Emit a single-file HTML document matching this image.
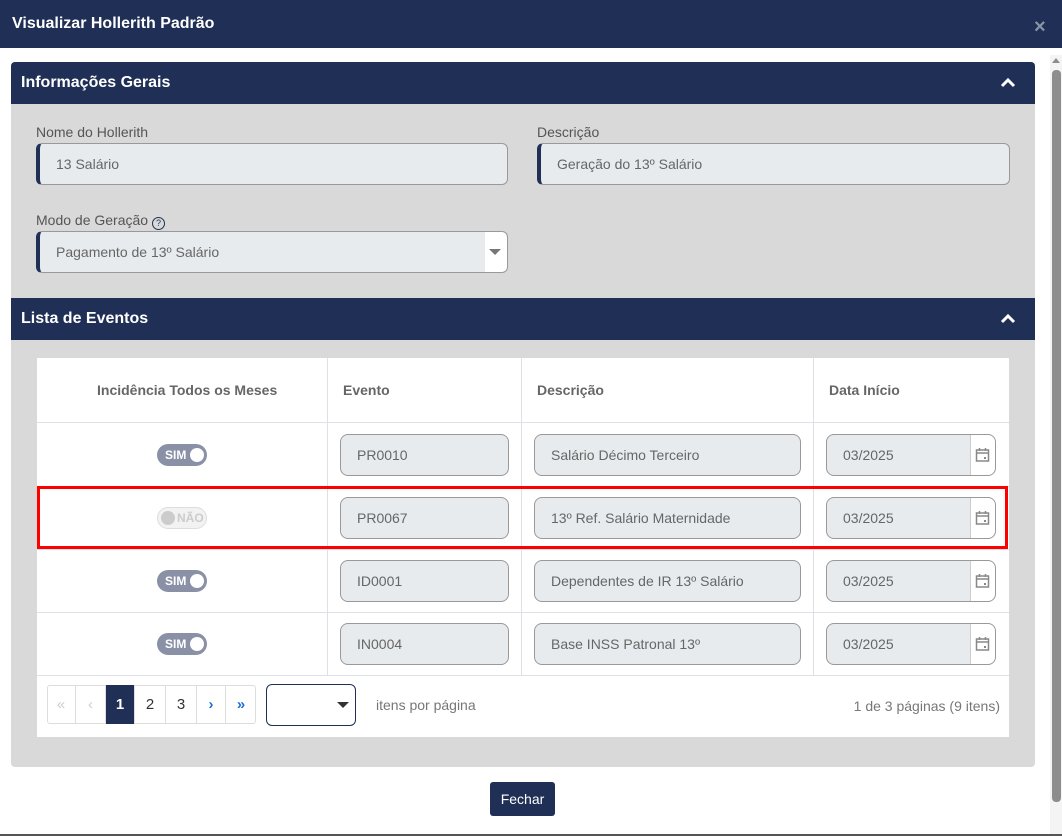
<!DOCTYPE html>
<html><head><meta charset="utf-8"><style>
*{box-sizing:border-box;margin:0;padding:0}
body{width:1062px;height:836px;position:relative;background:#fff;font-family:"Liberation Sans",Arial,sans-serif;overflow:hidden;color:#555}
.a{position:absolute}
.navy{background:#1f2f56}
.lbl{font-size:14px;color:#555}
.inp{position:absolute;background:#e8ebee;border:1px solid #999;border-left:4px solid #1f2f56;border-radius:6px;font-size:14px;color:#666;padding-left:16px;line-height:40px}
.ti{position:absolute;background:#e8ebee;border:1px solid #999;border-radius:8px;font-size:14px;color:#666;padding-left:16px;line-height:40px;height:42px}
.sw{position:absolute;left:157px;width:50px;height:22px;border-radius:11px;background:#8a91a6;color:#fff;font-size:12px;font-weight:bold;line-height:22px;padding-left:8px}
.sw:after{content:"";position:absolute;right:3px;top:4px;width:14px;height:14px;border-radius:50%;background:#fff}
.th{position:absolute;top:382px;font-size:14px;font-weight:bold;color:#666}
.hl{position:absolute;left:37px;width:972px;height:1px;background:#dde1e6}
.vl{position:absolute;top:358px;height:317px;width:1px;background:#dde1e6}
.pb{position:absolute;top:685px;height:39px;line-height:39px;text-align:center;font-size:15px;border-right:1px solid #ddd}
</style></head><body>
<div class="a navy" style="left:0;top:0;width:1062px;height:48px"></div>
<div class="a" style="left:12px;top:15px;color:#fff;font-size:16px;font-weight:bold">Visualizar Hollerith Padrão</div>
<div class="a" style="left:1034px;top:16px;color:#8a93a8;font-size:20px;font-weight:bold">×</div>
<div class="a" style="left:1050px;top:55px;width:12px;height:781px;background:#f4f4f4"></div>
<div class="a" style="left:1052px;top:70px;width:9px;height:732px;background:#8d8d8d;border-radius:4px"></div>
<div class="a" style="left:1052px;top:58px;width:0;height:0;border-left:4px solid transparent;border-right:4px solid transparent;border-bottom:5px solid #8d8d8d"></div>
<div class="a" style="left:0;top:834px;width:1062px;height:2px;background:#555"></div>

<div class="a" style="left:11px;top:62px;width:1024px;height:705px;background:#d9d9d9;border-radius:4px"></div>
<div class="a navy" style="left:11px;top:62px;width:1024px;height:42px;border-radius:4px 4px 0 0"></div>
<div class="a" style="left:21px;top:74px;color:#fff;font-size:16px;font-weight:bold">Informações Gerais</div>
<svg class="a" style="left:1000px;top:77px" width="16" height="12"><path d="M2 9 L8 3 L14 9" stroke="#fff" stroke-width="3" fill="none"/></svg>
<div class="a lbl" style="left:36px;top:124px">Nome do Hollerith</div>
<div class="inp" style="left:36px;top:143px;width:472px;height:42px">13 Salário</div>
<div class="a lbl" style="left:537px;top:124px">Descrição</div>
<div class="inp" style="left:537px;top:143px;width:473px;height:42px">Geração do 13º Salário</div>
<div class="a lbl" style="left:36px;top:212px">Modo de Geração <span style="display:inline-block;width:13px;height:13px;border:1.5px solid #1f2f56;border-radius:50%;font-size:9px;line-height:10px;text-align:center;color:#1f2f56;vertical-align:-1px">?</span></div>
<div class="inp" style="left:36px;top:231px;width:472px;height:42px;background:linear-gradient(90deg,#e8ebee 445px,#fff 445px)">Pagamento de 13º Salário</div>
<div class="a" style="left:489px;top:249px;border-left:6px solid transparent;border-right:6px solid transparent;border-top:6px solid #777"></div>

<div class="a navy" style="left:11px;top:298px;width:1024px;height:42px"></div>
<div class="a" style="left:21px;top:310px;color:#fff;font-size:16px;font-weight:bold">Lista de Eventos</div>
<svg class="a" style="left:1000px;top:313px" width="16" height="12"><path d="M2 9 L8 3 L14 9" stroke="#fff" stroke-width="3" fill="none"/></svg>

<div class="a" style="left:37px;top:358px;width:972px;height:379px;background:#fff"></div>
<div class="th" style="left:97px">Incidência Todos os Meses</div>
<div class="th" style="left:343px">Evento</div>
<div class="th" style="left:537px">Descrição</div>
<div class="th" style="left:829px">Data Início</div>
<div class="hl" style="top:422px"></div><div class="hl" style="top:486px"></div><div class="hl" style="top:549px"></div><div class="hl" style="top:612px"></div><div class="hl" style="top:675px"></div>
<div class="vl" style="left:327px"></div><div class="vl" style="left:521px"></div><div class="vl" style="left:813px"></div>

<div class="sw" style="top:444px">SIM</div>
<div class="a" style="left:157px;top:507px;width:50px;height:22px;border-radius:11px;background:#f2f2f2;border:1px solid #ddd;color:#ccc;font-size:12px;font-weight:bold;line-height:20px;padding-left:19px">NÃO<span style="position:absolute;left:3px;top:3px;width:14px;height:14px;border-radius:50%;background:#ccc"></span></div>
<div class="sw" style="top:570px">SIM</div>
<div class="sw" style="top:633px">SIM</div>

<div class="ti" style="left:340px;top:434px;width:169px">PR0010</div>
<div class="ti" style="left:340px;top:497px;width:169px">PR0067</div>
<div class="ti" style="left:340px;top:560px;width:169px">ID0001</div>
<div class="ti" style="left:340px;top:623px;width:169px">IN0004</div>
<div class="ti" style="left:534px;top:434px;width:267px">Salário Décimo Terceiro</div>
<div class="ti" style="left:534px;top:497px;width:267px">13º Ref. Salário Maternidade</div>
<div class="ti" style="left:534px;top:560px;width:267px">Dependentes de IR 13º Salário</div>
<div class="ti" style="left:534px;top:623px;width:267px">Base INSS Patronal 13º</div>
<div class="ti" style="left:826px;top:434px;width:170px;background:linear-gradient(90deg,#e8ebee 143px,#ccc 143px,#ccc 144px,#fff 144px)">03/2025</div>
<div class="ti" style="left:826px;top:497px;width:170px;background:linear-gradient(90deg,#e8ebee 143px,#ccc 143px,#ccc 144px,#fff 144px)">03/2025</div>
<div class="ti" style="left:826px;top:560px;width:170px;background:linear-gradient(90deg,#e8ebee 143px,#ccc 143px,#ccc 144px,#fff 144px)">03/2025</div>
<div class="ti" style="left:826px;top:623px;width:170px;background:linear-gradient(90deg,#e8ebee 143px,#ccc 143px,#ccc 144px,#fff 144px)">03/2025</div>
<svg class="a" style="left:975px;top:447px" width="15" height="16"><g stroke="#888" fill="none" stroke-width="1.5"><rect x="1.5" y="3" width="12" height="11"/><path d="M1.5 6h12M4.5 1v3M10.5 1v3"/></g><rect x="9" y="10" width="2" height="2" fill="#888"/></svg>
<svg class="a" style="left:975px;top:510px" width="15" height="16"><g stroke="#888" fill="none" stroke-width="1.5"><rect x="1.5" y="3" width="12" height="11"/><path d="M1.5 6h12M4.5 1v3M10.5 1v3"/></g><rect x="9" y="10" width="2" height="2" fill="#888"/></svg>
<svg class="a" style="left:975px;top:573px" width="15" height="16"><g stroke="#888" fill="none" stroke-width="1.5"><rect x="1.5" y="3" width="12" height="11"/><path d="M1.5 6h12M4.5 1v3M10.5 1v3"/></g><rect x="9" y="10" width="2" height="2" fill="#888"/></svg>
<svg class="a" style="left:975px;top:636px" width="15" height="16"><g stroke="#888" fill="none" stroke-width="1.5"><rect x="1.5" y="3" width="12" height="11"/><path d="M1.5 6h12M4.5 1v3M10.5 1v3"/></g><rect x="9" y="10" width="2" height="2" fill="#888"/></svg>

<div class="a" style="left:37px;top:486px;width:971px;height:63px;border:3px solid #f00"></div>

<div class="a" style="left:47px;top:685px;width:209px;height:39px;border:1px solid #ddd;border-radius:3px"></div>
<div class="pb" style="left:47px;width:29px;color:#ccc">«</div>
<div class="pb" style="left:76px;width:30px;color:#ccc">‹</div>
<div class="pb" style="left:106px;width:29px;background:#1f2f56;color:#fff;font-weight:bold">1</div>
<div class="pb" style="left:135px;width:31px;color:#333">2</div>
<div class="pb" style="left:166px;width:31px;color:#333">3</div>
<div class="pb" style="left:197px;width:29px;color:#1a6fdc;font-weight:bold">›</div>
<div class="pb" style="left:226px;width:30px;color:#1a6fdc;font-weight:bold;border-right:none">»</div>
<div class="a" style="left:266px;top:684px;width:90px;height:42px;border:1px solid #1f2f56;border-radius:6px"></div>
<div class="a" style="left:337px;top:702px;border-left:6px solid transparent;border-right:6px solid transparent;border-top:6px solid #333"></div>
<div class="a" style="left:376px;top:697px;font-size:14px;color:#777">itens por página</div>
<div class="a" style="left:800px;top:698px;width:200px;text-align:right;font-size:14px;color:#777">1 de 3 páginas (9 itens)</div>

<div class="a navy" style="left:490px;top:782px;width:65px;height:34px;border-radius:3px;color:#fff;font-size:14px;text-align:center;line-height:34px">Fechar</div>
</body></html>
